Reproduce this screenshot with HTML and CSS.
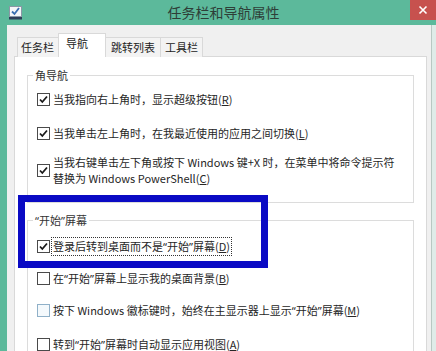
FILE: index.html
```html
<!DOCTYPE html>
<html lang="zh-CN">
<head>
<meta charset="utf-8">
<title>任务栏和导航属性</title>
<link rel="stylesheet" href="styles.css">
</head>
<body>
<div class="window">
  <div class="titlebar">
    <svg class="app-icon" width="15" height="15" viewBox="0 0 15 15">
      <rect x="1.5" y="1.5" width="12" height="10" fill="#f4f6f8" stroke="#8a97a6"/>
      <path d="M4 6.5 L6.5 9 L11 3" fill="none" stroke="#3a6fb0" stroke-width="1.8"/>
      <rect x="1" y="12" width="13" height="2.5" fill="#2e3d57"/>
    </svg>
    <div class="title">任务栏和导航属性</div>
    <div class="close">
      <svg width="10" height="10" viewBox="0 0 10 10"><path d="M1.5 1.5 L8.5 8.5 M8.5 1.5 L1.5 8.5" stroke="#fff" stroke-width="1.6"/></svg>
    </div>
  </div>
  <div class="frame">
    <div class="client">
      <div class="tabs">
        <div class="tab t1">任务栏</div>
        <div class="tab t2 active">导航</div>
        <div class="tab t3">跳转列表</div>
        <div class="tab t4">工具栏</div>
      </div>
      <div class="panel">
        <fieldset class="group g1">
          <legend>角导航</legend>
          <div class="row r1">
            <span class="cb checked"><svg width="13" height="13" viewBox="0 0 13 13"><path d="M3 6.5 L5.3 9 L10 3.5" fill="none" stroke="#1a1a1a" stroke-width="1.8"/></svg></span>
            <span class="txt">当我指向右上角时，显示超级按钮(<u>R</u>)</span>
          </div>
          <div class="row r2">
            <span class="cb checked"><svg width="13" height="13" viewBox="0 0 13 13"><path d="M3 6.5 L5.3 9 L10 3.5" fill="none" stroke="#1a1a1a" stroke-width="1.8"/></svg></span>
            <span class="txt">当我单击左上角时，在我最近使用的应用之间切换(<u>L</u>)</span>
          </div>
          <div class="row r3">
            <span class="cb checked"><svg width="13" height="13" viewBox="0 0 13 13"><path d="M3 6.5 L5.3 9 L10 3.5" fill="none" stroke="#1a1a1a" stroke-width="1.8"/></svg></span>
            <span class="txt">当我右键单击左下角或按下 Windows 键+X 时，在菜单中将命令提示符<br>替换为 Windows PowerShell(<u>C</u>)</span>
          </div>
        </fieldset>
        <fieldset class="group g2">
          <legend><span class="q">“</span>开始<span class="q">”</span>屏幕</legend>
          <div class="row r4">
            <span class="cb checked"><svg width="13" height="13" viewBox="0 0 13 13"><path d="M3 6.5 L5.3 9 L10 3.5" fill="none" stroke="#1a1a1a" stroke-width="1.8"/></svg></span>
            <span class="txt focus">登录后转到桌面而不是<span class="q">“</span>开始<span class="q">”</span>屏幕(<u>D</u>)</span>
          </div>
          <div class="row r5">
            <span class="cb"></span>
            <span class="txt">在<span class="q">“</span>开始<span class="q">”</span>屏幕上显示我的桌面背景(<u>B</u>)</span>
          </div>
          <div class="row r6">
            <span class="cb hover"></span>
            <span class="txt">按下 Windows 徽标键时，始终在主显示器上显示<span class="q">“</span>开始<span class="q">”</span>屏幕(<u>M</u>)</span>
          </div>
          <div class="row r7">
            <span class="cb"></span>
            <span class="txt">转到<span class="q">“</span>开始<span class="q">”</span>屏幕时自动显示应用视图(<u>A</u>)</span>
          </div>
        </fieldset>
      </div>
    </div>
    <div class="edge"></div>
  </div>
  <div class="highlight"></div>
</div>
</body>
</html>
```

FILE: styles.css
```css
* { box-sizing: border-box; }
html, body { margin: 0; padding: 0; }
body {
  width: 436px;
  height: 351px;
  overflow: hidden;
  font-family: "Noto Sans CJK SC", "Noto Sans", sans-serif;
  color: #222;
}
.window {
  position: relative;
  width: 436px;
  height: 351px;
  display: flex;
  flex-direction: column;
  background: #5cb99b;
  overflow: hidden;
}
.titlebar {
  height: 25px;
  flex: 0 0 25px;
  display: flex;
  align-items: flex-start;
  padding-left: 8px;
}
.app-icon { margin-top: 5px; flex: 0 0 15px; }
.title {
  flex: 1;
  text-align: center;
  font-size: 14px;
  line-height: 25px;
  color: #2e3e38;
  padding-left: 14px;
}
.close {
  width: 26px;
  height: 20px;
  background: #c7514e;
  display: flex;
  align-items: center;
  justify-content: center;
}
.frame {
  flex: 1;
  display: flex;
  padding-left: 7px;
  min-height: 0;
}
.client {
  flex: 1;
  background: #f0f0f0;
  padding: 8px 4px 0 7px;
  display: flex;
  flex-direction: column;
  min-height: 0;
  overflow: hidden;
}
.edge {
  width: 5px;
  background: #dfece8;
  border-left: 1px solid #b8c8c2;
}
.tabs {
  display: flex;
  align-items: flex-end;
  padding-left: 3px;
  height: 24px;
  flex: 0 0 24px;
  position: relative;
  z-index: 1;
  margin-bottom: -1px;
}
.tab {
  height: 20px;
  border: 1px solid #d9d9d9;
  border-bottom: none;
  background: #f3f3f3;
  font-size: 11px;
  line-height: 19px;
  margin-left: -1px;
  white-space: nowrap;
}
.tab:first-child { margin-left: 0; }
.t1 { padding: 0 4px 0 3px; }
.t2 { width: 48px; padding-left: 7px; }
.t3 { padding: 0 5px; }
.t4 { padding: 0 4px; }
.tab.active {
  height: 24px;
  background: #fff;
  line-height: 18px;
  position: relative;
  z-index: 2;
}
.panel {
  flex: 1;
  background: #fff;
  border: 1px solid #d9d9d9;
  border-bottom: none;
  padding: 10px 12px 0 12px;
  min-height: 0;
  overflow: hidden;
}
.group {
  margin: 0;
  border: 1px solid #dcdcdc;
  padding: 0 8px 0 9px;
  min-width: 0;
}
.group legend {
  font-size: 11px;
  line-height: 16px;
  padding: 0 2px;
  margin-left: -4px;
  color: #333;
}
.q { font-family: "Noto Sans", "DejaVu Sans", sans-serif; }
.g1 { padding-top: 8px; padding-bottom: 16px; }
.g2 { margin-top: 9px; padding-top: 9px; padding-bottom: 8px; }
.row {
  display: flex;
  align-items: center;
  font-size: 11px;
  line-height: 16px;
  white-space: nowrap;
}
.r2 { margin-top: 18px; }
.r3 { margin-top: 13px; }
.r5, .r6 { margin-top: 15px; }
.r7 { margin-top: 17px; }
.cb {
  flex: 0 0 13px;
  width: 13px;
  height: 13px;
  border: 1px solid #4a4a4a;
  background: #fff;
  margin-right: 3px;
  display: flex;
  align-items: center;
  justify-content: center;
}
.cb svg { display: block; margin: -1px; }
.cb.hover { border-color: #8fb0c8; background: #f4f9fc; }
.txt { color: #262626; }
.txt.focus {
  outline: 1px dotted #333;
  padding: 0 1px;
  margin-left: -1px;
}
.txt u { text-underline-offset: 1px; }
.highlight {
  position: absolute;
  left: 18px;
  top: 195px;
  width: 250px;
  height: 73px;
  border: 7px solid #0a0ac4;
  pointer-events: none;
}
```
